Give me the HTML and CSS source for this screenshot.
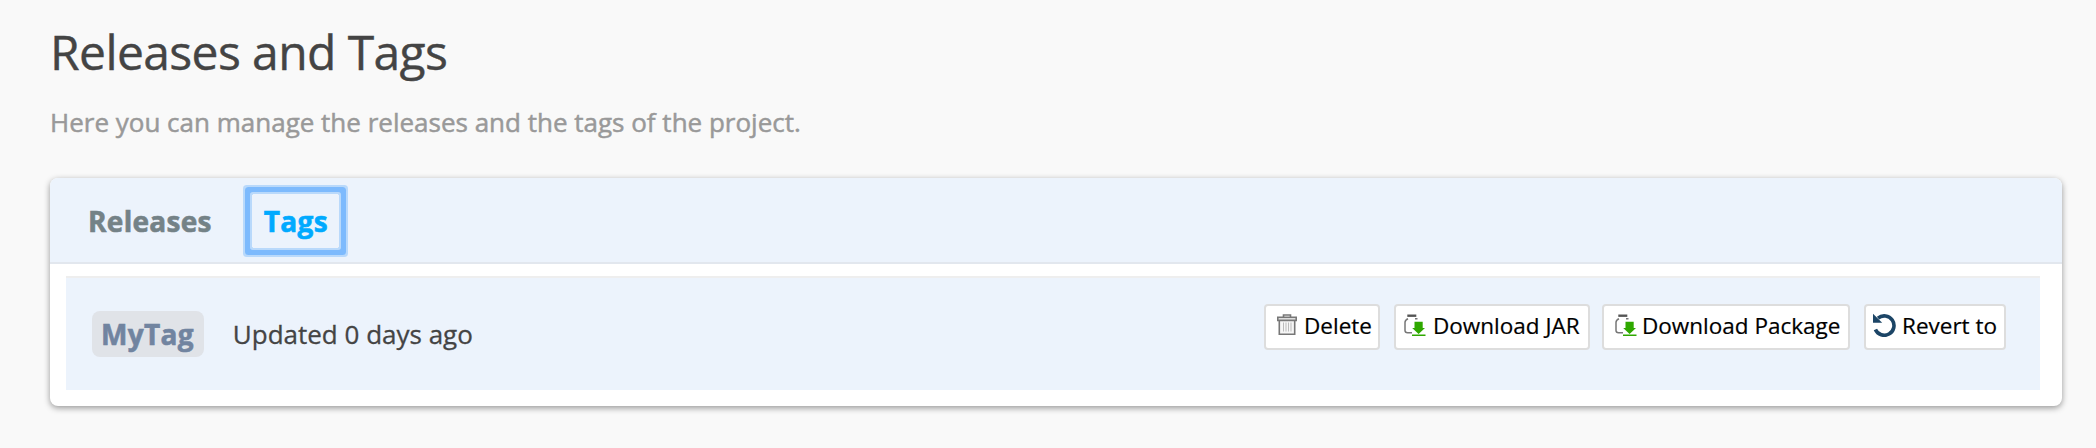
FILE: index.html
```html
<!DOCTYPE html>
<html lang="en">
<head>
    <meta charset="UTF-8">
    <meta name="viewport" content="width=device-width, initial-scale=1.0">
    <title>Releases and Tags</title>
    <link rel="stylesheet" href="styles.css">
</head>
<body>
    <h1 class="page-title">Releases and Tags</h1>
    <p class="page-description">Here you can manage the releases and the tags of the project.</p>

    <div class="panel">
        <div class="tabs">
            <a class="tab">Releases</a>
            <a class="tab active">Tags</a>
        </div>

        <div class="tag-row">
            <span class="tag-name">MyTag</span>
            <span class="tag-updated">Updated 0 days ago</span>

            <div class="actions">
                <button class="btn btn-delete">
                    <svg class="icon" width="24" height="24" viewBox="0 0 24 24" fill="none" stroke="#777" stroke-width="1.6">
                        <path d="M8.5 4V2h7v2"/>
                        <path d="M2.8 4.3h18.4v3.2H2.8z" fill="#ddd"/>
                        <path d="M4.3 7.5h15.4v13.7H4.3z" fill="#f6f6f6"/>
                        <path d="M8.5 9.5v9M11 9.5v9M13.5 9.5v9M16 9.5v9" stroke="#bbb" stroke-width="1"/>
                    </svg>
                    Delete
                </button>
                <button class="btn btn-jar">
                    <svg class="icon" width="24" height="24" viewBox="0 0 24 24">
                        <path d="M5.3 1.5h9v2.4h-9z" fill="#555"/>
                        <path d="M6 5.8C4.5 6.5 3 7.5 3 9.5V17.5Q3 19.7 5.5 19.7H10M13 5.8h2.5" fill="none" stroke="#777" stroke-width="1.5"/>
                        <path d="M12.5 8.7h8.2V15h2.3l-6.4 6-6.4-6h2.3zM10 21.5h13.5V23H10z" fill="#2fa800"/>
                    </svg>
                    Download JAR
                </button>
                <button class="btn btn-package">
                    <svg class="icon" width="24" height="24" viewBox="0 0 24 24">
                        <path d="M5.3 1.5h9v2.4h-9z" fill="#555"/>
                        <path d="M6 5.8C4.5 6.5 3 7.5 3 9.5V17.5Q3 19.7 5.5 19.7H10M13 5.8h2.5" fill="none" stroke="#777" stroke-width="1.5"/>
                        <path d="M12.5 8.7h8.2V15h2.3l-6.4 6-6.4-6h2.3zM10 21.5h13.5V23H10z" fill="#2fa800"/>
                    </svg>
                    Download Package
                </button>
                <button class="btn btn-revert">
                    <svg class="icon" width="24" height="24" viewBox="0 0 24 24">
                        <path d="M6 5.2A9.7 9.7 0 1 1 3.4 16.5" fill="none" stroke="#1c4566" stroke-width="3.6"/>
                        <path d="M1 .8L10.2 9.7H1z" fill="#1c4566"/>
                    </svg>
                    Revert to
                </button>
            </div>
        </div>
    </div>
</body>
</html>
```

FILE: styles.css
```css
body {
    margin: 0;
    padding: 19px 34px 0 50px;
    min-height: 448px;
    box-sizing: border-box;
    background: #f9f9f9;
    color: #444;
    font-family: 'Open Sans', sans-serif;
}

.page-title {
    margin: 0;
    font-size: 48px;
    font-weight: 400;
    line-height: 66px;
    letter-spacing: -0.6px;
    -webkit-text-stroke: 0.4px;
}

.page-description {
    margin: 15px 0 0;
    color: #999;
    font-size: 26px;
    line-height: 44px;
    -webkit-text-stroke: 0.5px;
}

.panel {
    margin-top: 34px;
    height: 228px;
    background: #fff;
    border-radius: 8px;
    box-shadow: 0 2px 6px rgba(0, 0, 0, 0.4);
}

.tabs {
    display: flex;
    align-items: center;
    gap: 40px;
    height: 86px;
    padding: 1px 38px 0;
    box-sizing: border-box;
    background: #ecf3fc;
    border-bottom: 2px solid #e2e7ee;
    border-radius: 8px 8px 0 0;
    font-size: 28px;
    font-weight: 700;
    letter-spacing: 0.3px;
    color: #748287;
    -webkit-text-stroke: 0.6px;
}

.tab.active {
    padding: 8px 11px 8px 12px;
    line-height: 38px;
    color: #00aaff;
    border-radius: 1px;
    box-shadow: 0 0 0 2px #b9d9fb, 0 0 0 7px #7dbafd, 0 0 0 9px #b9d9fb;
}

.tag-row {
    display: flex;
    align-items: center;
    height: 114px;
    margin: 12px 22px 0 16px;
    padding: 0 34px 0 26px;
    background: #ecf3fc;
    border-top: 2px solid #eee;
    box-sizing: border-box;
}

.tag-name {
    padding: 0 10px 0 9px;
    border-radius: 8px;
    background: #e0e3e8;
    color: #7184a0;
    font-size: 28px;
    font-weight: 700;
    line-height: 46px;
    letter-spacing: 0.3px;
    -webkit-text-stroke: 0.6px;
}

.tag-updated {
    margin-left: 29px;
    font-size: 26px;
    -webkit-text-stroke: 0.3px;
}

.actions {
    display: flex;
    gap: 14px;
    margin-left: auto;
    margin-bottom: 14px;
}

.btn {
    display: flex;
    align-items: center;
    gap: 5px;
    height: 46px;
    padding: 0 0 4px 9px;
    background: #fff;
    border: 2px solid #ddd;
    border-radius: 4px;
    color: #000;
    font-family: inherit;
    font-size: 22.5px;
    white-space: nowrap;
    -webkit-text-stroke: 0.2px;
}

.btn-delete {
    width: 116px;
}

.btn-jar {
    width: 196px;
    padding-left: 6px;
    gap: 7px;
}

.btn-package {
    width: 248px;
    margin-left: -2px;
}

.btn-revert {
    width: 142px;
    padding-left: 6px;
    gap: 6px;
}

.icon {
    flex-shrink: 0;
}
```
